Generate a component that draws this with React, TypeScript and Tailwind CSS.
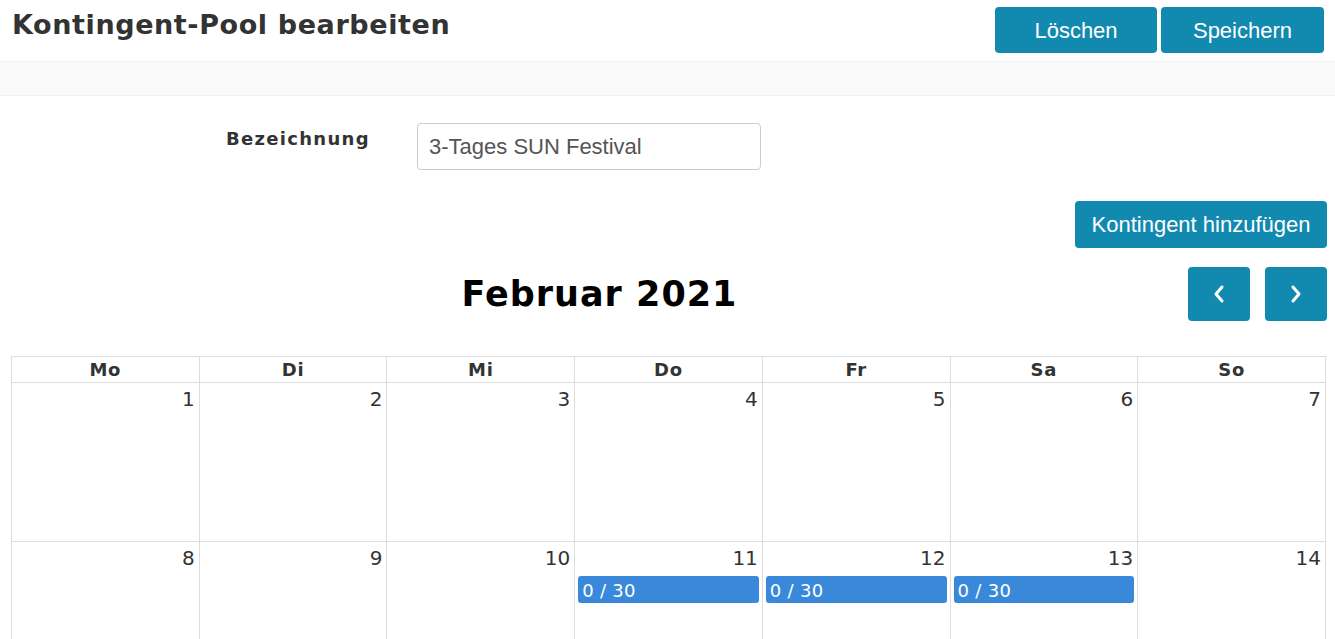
import React from "react";

const btn =
  "bg-[#128aaf] text-white rounded-[4px] font-['Liberation_Sans',Arial,sans-serif] text-[22px] flex items-center justify-center";

function Event() {
  return (
    <div className="mx-[3px] mt-[6px] h-[27px] rounded-[3px] bg-[#3a88d9] text-white text-[18px] tracking-[0.3px] leading-[29px] pl-[4px] font-['DejaVu_Sans',Verdana,sans-serif]">
      0 / 30
    </div>
  );
}

export default function App() {
  const days = ["Mo", "Di", "Mi", "Do", "Fr", "Sa", "So"];
  const weeks = [
    [1, 2, 3, 4, 5, 6, 7],
    [8, 9, 10, 11, 12, 13, 14],
  ];
  return (
    <div className="w-[1335px] h-[639px] overflow-hidden bg-white text-[#333] font-['DejaVu_Sans',Verdana,sans-serif]">
      <div className="flex justify-between items-start h-[61px] pl-[12px] pr-[11px]">
        <h1 className="text-[27px] tracking-[0.6px] font-bold mt-[8px] leading-[34px]">Kontingent-Pool bearbeiten</h1>
        <div className="flex gap-[4px] mt-[7px]">
          <button className={btn + " w-[162px] h-[46px]"}>Löschen</button>
          <button className={btn + " w-[163px] h-[46px]"}>Speichern</button>
        </div>
      </div>
      <div className="h-[35px] bg-[#fafafa] border-y border-[#f0f0f0]" />
      <div className="flex items-start mt-[27px]">
        <label className="w-[417px] pl-[226px] pt-[4px] text-[18px] tracking-[1.3px] font-bold leading-[24px]">Bezeichnung</label>
        <div className="w-[344px] h-[47px] border border-[#ccc] rounded-[4px] px-[11px] flex items-center text-[22px] text-[#555] font-['Liberation_Sans',Arial,sans-serif]">
          3-Tages SUN Festival
        </div>
      </div>
      <div className="flex justify-end pr-[8px] mt-[31px]">
        <button className={btn + " w-[252px] h-[47px]"}>Kontingent hinzufügen</button>
      </div>
      <div className="pl-[11px] pr-[8px] mt-[19px]">
        <div className="flex justify-between items-center h-[54px]">
          <div />
          <div className="text-[35px] tracking-[1px] font-bold text-black leading-[40px]">Februar 2021</div>
          <div className="flex gap-[15px]">
            <button className={btn + " w-[62px] h-[54px]"}>
              <svg width="14" height="20" viewBox="0 0 14 20" fill="none" stroke="white" strokeWidth="3" strokeLinecap="round" strokeLinejoin="round">
                <path d="M10 3 L4 10 L10 17" />
              </svg>
            </button>
            <button className={btn + " w-[62px] h-[54px]"}>
              <svg width="14" height="20" viewBox="0 0 14 20" fill="none" stroke="white" strokeWidth="3" strokeLinecap="round" strokeLinejoin="round">
                <path d="M4 3 L10 10 L4 17" />
              </svg>
            </button>
          </div>
        </div>
        <div className="mt-[35px] w-[1315px] border-l border-t border-[#ddd]">
          <div className="grid grid-cols-7">
            {days.map((d) => (
              <div key={d} className="h-[26px] border-r border-b border-[#ddd] text-center font-bold text-[18px] tracking-[0.8px] leading-[26px]">
                {d}
              </div>
            ))}
          </div>
          {weeks.map((w, i) => (
            <div key={i} className="grid grid-cols-7">
              {w.map((n) => (
                <div key={n} className="h-[159px] border-r border-b border-[#ddd]">
                  <div className="text-right pr-[4px] pt-[4px] text-[20px] leading-[24px]">{n}</div>
                  {n >= 11 && n <= 13 && <Event />}
                </div>
              ))}
            </div>
          ))}
        </div>
      </div>
    </div>
  );
}
